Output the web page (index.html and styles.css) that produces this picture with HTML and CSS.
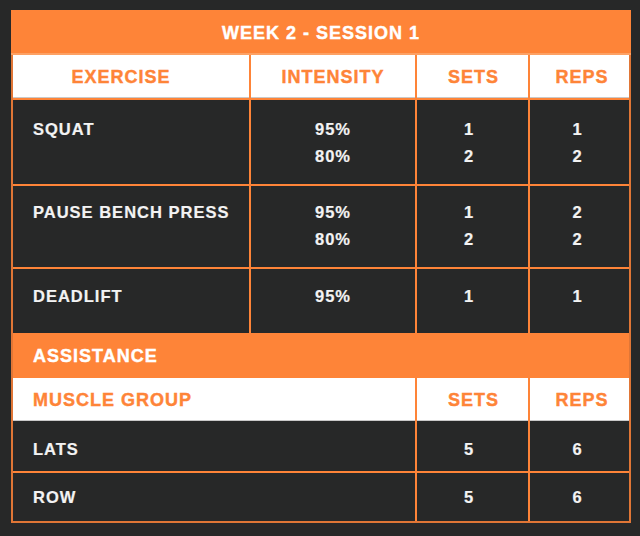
FILE: index.html
```html
<!DOCTYPE html>
<html>
<head>
<meta charset="utf-8">
<link rel="stylesheet" href="styles.css">
</head>
<body>
<div class="sheet">
  <div class="title">WEEK 2 - SESSION 1</div>
  <div class="table">
    <div class="row cols-4 head">
      <div class="cell h-ex">EXERCISE</div>
      <div class="cell">INTENSITY</div>
      <div class="cell h-sets">SETS</div>
      <div class="cell h-reps">REPS</div>
    </div>
    <div class="row cols-4 data r-squat">
      <div class="cell name">SQUAT</div>
      <div class="cell">95%<br>80%</div>
      <div class="cell d-sets">1<br>2</div>
      <div class="cell d-reps">1<br>2</div>
    </div>
    <div class="row cols-4 data r-bench">
      <div class="cell name">PAUSE BENCH PRESS</div>
      <div class="cell">95%<br>80%</div>
      <div class="cell d-sets">1<br>2</div>
      <div class="cell d-reps">2<br>2</div>
    </div>
    <div class="row cols-4 data r-dead">
      <div class="cell name">DEADLIFT</div>
      <div class="cell">95%</div>
      <div class="cell d-sets">1</div>
      <div class="cell d-reps">1</div>
    </div>
    <div class="section">ASSISTANCE</div>
    <div class="row cols-3 head">
      <div class="cell name">MUSCLE GROUP</div>
      <div class="cell h-sets">SETS</div>
      <div class="cell h-reps">REPS</div>
    </div>
    <div class="row cols-3 data r-lats">
      <div class="cell name">LATS</div>
      <div class="cell d-sets">5</div>
      <div class="cell d-reps">6</div>
    </div>
    <div class="row cols-3 data r-row">
      <div class="cell name">ROW</div>
      <div class="cell d-sets">5</div>
      <div class="cell d-reps">6</div>
    </div>
  </div>
</div>
</body>
</html>
```
FILE: styles.css
```css
* { box-sizing: border-box; }
body {
  margin: 0;
  background: #272828;
  font-family: "Liberation Sans", Arial, sans-serif;
}
.sheet {
  width: 620px;
  margin: 10px 0 0 11px;
}
.title {
  height: 45px;
  padding-top: 3px;
  background: #fe8438;
  color: #fff;
  font-weight: 700;
  font-size: 18px;
  letter-spacing: 1px;
  -webkit-text-stroke: 0.4px #fff;
  display: flex;
  align-items: center;
  justify-content: center;
  border-bottom: 2px solid #fda164;
}
.table {
  background: #fe8438;
  border: 2px solid #e07636;
  border-top: 0;
}
.row {
  display: grid;
  column-gap: 2px;
}
.cols-4 { grid-template-columns: 236px 164px 111px 99px; }
.cols-3 { grid-template-columns: 402px 111px 99px; }
.cell {
  background: #272828;
  color: #f3f3f3;
  font-weight: 700;
  font-size: 16.5px;
  letter-spacing: 1px;
  line-height: 27px;
  text-align: center;
  -webkit-text-stroke: 0.2px #f3f3f3;
}
.cell.name {
  text-align: left;
  padding-left: 20px;
}
.head { height: 43px; }
.head .cell {
  background: #fff;
  color: #fe8438;
  font-size: 18px;
  -webkit-text-stroke: 0.4px #fe8438;
  border-bottom: 1px solid #c9c9c9;
  padding-top: 2px;
  display: flex;
  align-items: center;
  justify-content: center;
}
.head .cell.name { justify-content: flex-start; }
.head .h-ex { padding-right: 20px; }
.head .h-sets { padding-left: 2px; }
.head .h-reps { padding-left: 5px; }
.data .d-sets { padding-right: 7px; }
.data .d-reps { padding-right: 4px; }
.r-squat { height: 84px; margin-top: 2px; }
.r-squat .cell { padding-top: 16px; }
.r-bench { height: 81px; margin-top: 2px; }
.r-bench .cell { padding-top: 13px; }
.r-dead { height: 64px; margin-top: 2px; }
.r-dead .cell { padding-top: 14px; }
.section {
  height: 45px;
  padding: 2px 0 0 20px;
  display: flex;
  align-items: center;
  color: #fff;
  font-weight: 700;
  font-size: 18px;
  letter-spacing: 1px;
  -webkit-text-stroke: 0.4px #fff;
}
.r-lats { height: 50px; }
.r-lats .cell { padding-top: 15px; }
.r-row { height: 48px; margin-top: 2px; }
.r-row .cell { padding-top: 11px; }
```
